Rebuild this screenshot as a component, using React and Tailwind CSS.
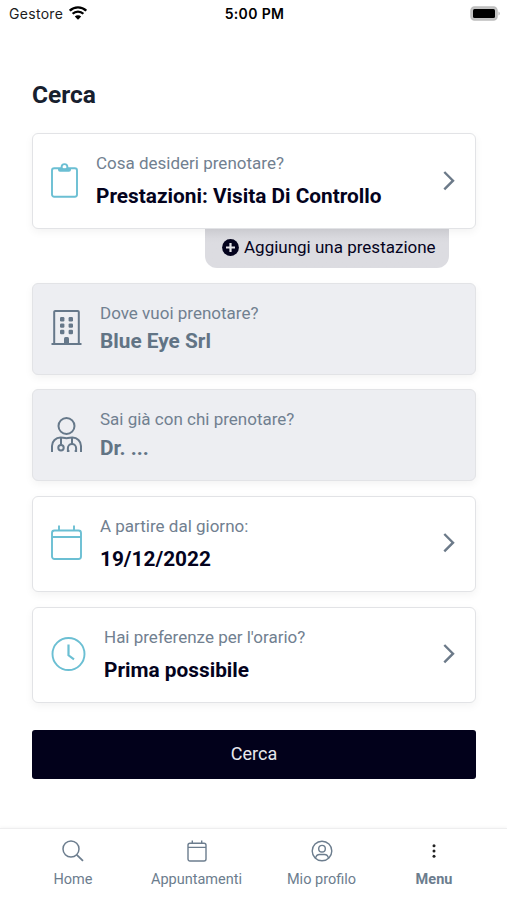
import React from 'react';
import clsx from 'clsx';

const ClipboardIcon = () => (
  <svg className="block shrink-0" width="27" height="36" viewBox="0 0 27 36" fill="none" stroke="currentColor" strokeWidth="1.9">
    <rect x="1" y="5.2" width="25" height="28.5" rx="2.2" />
    <path d="M7 5.2v1.500a2 2 0 0 0 2 2h9a2 2 0 0 0 2-2V5.200h-2.800a3.700 3.700 0 0 0-7.400 0z" fill="currentColor" stroke="none" />
    <circle cx="13.500" cy="4" r="2.900" fill="white" />
    <path d="M10 5.200h7V7h-7z" fill="currentColor" stroke="none" />
  </svg>
);

const BuildingIcon = () => (
  <svg className="block shrink-0" width="31" height="36" viewBox="0 0 31 36" fill="none" stroke="currentColor" strokeWidth="2">
    <path d="M3.200 34V2a1 1 0 0 1 1-1h22.600a1 1 0 0 1 1 1V34" />
    <path d="M.5 34h30" />
    <path d="M13 34v-5.500a1.500 1.500 0 0 1 1.500-1.500h2a1.500 1.500 0 0 1 1.500 1.500V34z" fill="currentColor" stroke="none" />
    <g fill="currentColor" stroke="none">
      <rect x="9" y="7" width="4.400" height="4.400" rx="1.200" />
      <rect x="17.600" y="7" width="4.400" height="4.400" rx="1.200" />
      <rect x="9" y="13.400" width="4.400" height="4.400" rx="1.200" />
      <rect x="17.600" y="13.400" width="4.400" height="4.400" rx="1.200" />
      <rect x="9" y="19.800" width="4.400" height="4.400" rx="1.200" />
      <rect x="17.600" y="19.800" width="4.400" height="4.400" rx="1.200" />
    </g>
  </svg>
);

const DoctorIcon = () => (
  <svg className="block shrink-0" width="31" height="36" viewBox="0 0 31 36" fill="none" stroke="currentColor" strokeWidth="2">
    <circle cx="15.500" cy="9" r="8" />
    <path d="M1 35v-6a8.500 8.500 0 0 1 8.500-8.500c2 0 3.500.7 6 .7s4-.7 6-.7a8.500 8.500 0 0 1 8.500 8.500v6" />
    <path d="M10 20.700v7" />
    <circle cx="10" cy="30.800" r="2.700" />
    <path d="M21 20.700v6.300M17 34h1.400M16.900 35v-4a4.100 4.100 0 0 1 8.200 0v4M25.100 34h-1.400" />
  </svg>
);

const CalendarIcon = () => (
  <svg className="block shrink-0" width="31" height="36" viewBox="0 0 31 36" fill="none" stroke="currentColor" strokeWidth="1.900">
    <rect x="1" y="5.500" width="29" height="28.500" rx="2.500" />
    <path d="M1 12h29M8 .5v5M23 .5v5" />
  </svg>
);

const ClockIcon = () => (
  <svg className="block shrink-0" width="35" height="35" viewBox="0 0 35 35" fill="none" stroke="currentColor" strokeWidth="1.900">
    <circle cx="17.500" cy="17" r="16" />
    <path d="M17.500 7.500v10.800l5.500 4" strokeWidth="2.200" />
  </svg>
);

const ChevronIcon = () => (
  <svg className="block shrink-0" width="12" height="20" viewBox="0 0 12 20" fill="none" stroke="currentColor" strokeWidth="2.400">
    <path d="M1.300 1L10 9.700l-8.700 8.700" />
  </svg>
);

const fields = [
  { label: 'Dove vuoi prenotare?', value: 'Blue Eye Srl', icon: <BuildingIcon />, disabled: true },
  { label: 'Sai già con chi prenotare?', value: 'Dr. ...', icon: <DoctorIcon />, disabled: true },
  { label: 'A partire dal giorno:', value: '19/12/2022', icon: <CalendarIcon /> },
  { label: "Hai preferenze per l'orario?", value: 'Prima possibile', icon: <ClockIcon /> },
];

function FieldCard({ label, value, icon, disabled }) {
  return (
    <button
      type="button"
      disabled={disabled}
      className={clsx(
        'relative flex w-full shrink-0 items-center rounded-md border border-[#e2e3e6] pb-px pl-[18px] pr-5 text-left shadow-[0_3px_8px_rgba(0,0,0,0.05)]',
        disabled ? 'h-[92px] bg-[#edeef2] text-[#66788a]' : 'h-24 bg-white text-[#6bbfd3]'
      )}
    >
      {icon}
      <div className="ml-[18px] flex-1 whitespace-nowrap">
        <div className="text-[17px] leading-6 text-[#718090]">{label}</div>
        <div
          className={clsx(
            'text-[20.8px] leading-7 font-bold',
            disabled ? 'mt-[2.5px] text-[#627485]' : 'mt-[7px] text-[#04031d]'
          )}
        >
          {value}
        </div>
      </div>
      {!disabled && (
        <span className="text-[#6c7a89]">
          <ChevronIcon />
        </span>
      )}
    </button>
  );
}

function StatusBar() {
  return (
    <div className="grid h-[27px] shrink-0 grid-cols-3 items-center pl-[9px] pr-[6px] font-['Inter',sans-serif] text-[14px] text-[#1c1c1c]">
      <div className="flex items-center gap-[6px]">
        <span className="tracking-[0.3px]">Gestore</span>
        <svg className="mb-0.5" width="18" height="14" viewBox="0 0 18 14" fill="none" stroke="black" strokeWidth="2.300">
          <path d="M.8 4.700a11.700 11.700 0 0 1 16.400 0M3.600 7.800a7.700 7.700 0 0 1 10.800 0" />
          <path d="M9 13.800l-3.200-3.300a4.600 4.600 0 0 1 6.400 0z" fill="black" stroke="none" />
        </svg>
      </div>
      <span className="-ml-px text-center font-semibold tracking-[0.35px] text-black">5:00 PM</span>
      <div className="flex justify-end pb-px">
        <svg width="31" height="15" viewBox="0 0 31 15">
          <rect x="1" y="1" width="26" height="13" rx="3.500" fill="#c4c4c4" stroke="#bdbdbd" strokeWidth="1.500" />
          <rect x="3" y="3" width="22" height="9" rx="1.500" fill="black" />
          <path d="M28.500 5.500a2.200 2.200 0 0 1 0 4z" fill="#b9b9b9" />
        </svg>
      </div>
    </div>
  );
}

function TabBar() {
  return (
    <nav className="flex h-[72px] shrink-0 border-t border-[#eeeeef] pl-[18px] pr-4 text-[14.500px] text-[#6c7d8e] shadow-[0_-1px_3px_rgba(0,0,0,0.04)]">
      <a className="flex w-[110px] flex-col items-center pt-[11px]">
        <svg width="22" height="22" viewBox="0 0 22 22" fill="none" stroke="currentColor" strokeWidth="1.500">
          <circle cx="9" cy="9" r="8" />
          <path d="M14.800 14.800l6.200 6" strokeWidth="1.800" />
        </svg>
        <span className="mt-[8px] leading-5">Home</span>
      </a>
      <a className="flex w-[137px] flex-col items-center pt-[11px]">
        <svg width="20" height="22" viewBox="0 0 20 22" fill="none" stroke="currentColor" strokeWidth="1.400">
          <rect x="1" y="3.200" width="18" height="17.800" rx="2" />
          <path d="M1 7.400h18M5.300 .5v3M14.700 .5v3" />
        </svg>
        <span className="mt-[8px] leading-5">Appuntamenti</span>
      </a>
      <a className="flex w-[113px] flex-col items-center pt-[11px]">
        <svg width="22" height="22" viewBox="0 0 22 22" fill="none" stroke="currentColor" strokeWidth="1.400">
          <circle cx="11" cy="11" r="9.800" />
          <circle cx="11" cy="8.700" r="3.300" />
          <path d="M4.500 18.200c.6-2.600 2-3.700 4-3.700h5c2 0 3.400 1.100 4 3.700" />
        </svg>
        <span className="mt-[8px] leading-5">Mio profilo</span>
      </a>
      <a className="flex w-[112px] flex-col items-center pt-[11px] font-bold">
        <svg width="22" height="22" viewBox="0 0 22 22" fill="#222">
          <circle cx="11" cy="5.800" r="1.500" />
          <circle cx="11" cy="11" r="1.500" />
          <circle cx="11" cy="16.200" r="1.500" />
        </svg>
        <span className="mt-[8px] leading-5">Menu</span>
      </a>
    </nav>
  );
}

function App() {
  return (
    <div className="flex h-[900px] w-[507px] flex-col overflow-hidden bg-white font-['Roboto',sans-serif]">
      <StatusBar />

      <main className="flex flex-1 flex-col pl-8 pr-[31px] pt-[52px]">
        <h1 className="text-[24.500px] leading-8 font-bold text-[#17202e]">Cerca</h1>

        <div className="mt-[22px] flex flex-col">
          <FieldCard label="Cosa desideri prenotare?" value="Prestazioni: Visita Di Controllo" icon={<ClipboardIcon />} />
          <button
            type="button"
            className="mr-[27px] flex h-[39px] w-[244px] items-center gap-[5px] self-end rounded-b-xl bg-gradient-to-b from-[#d3d3d8] to-[#dcdce1] to-35% pb-0.5 pl-[17px] text-[17px] whitespace-nowrap text-[#04031d]"
          >
            <svg width="17" height="17" viewBox="0 0 17 17">
              <circle cx="8.500" cy="8.500" r="8.400" fill="currentColor" />
              <path d="M8.500 4v9M4 8.500h9" stroke="#e4e4e8" strokeWidth="2.200" />
            </svg>
            Aggiungi una prestazione
          </button>
        </div>

        <div className="mt-[14.500px] flex flex-col gap-[14.700px]">
          {fields.map((field) => (
            <FieldCard key={field.label} {...field} />
          ))}
        </div>

        <button type="button" className="mt-[27px] h-[49px] w-full shrink-0 rounded-[3px] bg-[#02011b] pb-0.5 text-[18px] text-[#e8e8ec]">
          Cerca
        </button>
      </main>

      <TabBar />
    </div>
  );
}

export default App;
